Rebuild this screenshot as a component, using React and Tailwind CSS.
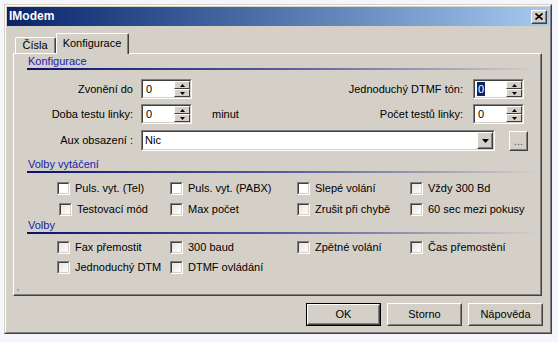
import React from "react";

function Sunken({ className, children }) {
  return (
    <div className={"border border-t-[#808080] border-l-[#808080] border-r-white border-b-white " + className}>
      <div className="flex h-full w-full border border-t-[#404040] border-l-[#404040] border-r-[#d4d0c8] border-b-[#d4d0c8] bg-white">
        {children}
      </div>
    </div>
  );
}

function Raised({ className, children }) {
  return (
    <div className={"border border-t-white border-l-white border-r-[#404040] border-b-[#404040] bg-[#d4d0c8] " + className}>
      <div className="flex h-full w-full items-center justify-center border border-t-[#d4d0c8] border-l-[#d4d0c8] border-r-[#808080] border-b-[#808080]">
        {children}
      </div>
    </div>
  );
}

function Spin({ value, selected }) {
  return (
    <Sunken className="h-[20px] w-[51px]">
      <div className="flex flex-1 items-center pl-[2px]">
        {selected ? (
          <span className="bg-[#0a246a] px-px leading-[14px] text-white">{value}</span>
        ) : (
          <span className="pl-px">{value}</span>
        )}
      </div>
      <div className="flex w-[16px] flex-col">
        <div className="flex h-[8px] items-center justify-center border border-t-white border-l-white border-r-[#404040] border-b-[#404040] bg-[#d4d0c8]">
          <svg width="5" height="3" viewBox="0 0 5 3">
            <path d="M2.5 0L5 3H0z" fill="black" />
          </svg>
        </div>
        <div className="flex h-[8px] items-center justify-center border border-t-white border-l-white border-r-[#404040] border-b-[#404040] bg-[#d4d0c8]">
          <svg width="5" height="3" viewBox="0 0 5 3">
            <path d="M0 0H5L2.5 3z" fill="black" />
          </svg>
        </div>
      </div>
    </Sunken>
  );
}

function Box({ shade }) {
  return (
    <div className="h-[13px] w-[13px] shrink-0 border border-t-[#808080] border-l-[#808080] border-r-white border-b-white">
      <div
        className={
          shade
            ? "h-full w-full border border-t-[#404040] border-l-[#404040] border-r-[#d4d0c8] border-b-[#d4d0c8] bg-linear-to-br from-[#e6e4de] to-white"
            : "h-full w-full border border-t-[#404040] border-l-[#404040] border-r-[#d4d0c8] border-b-[#d4d0c8] bg-white"
        }
      />
    </div>
  );
}

function Check({ label, shade, className }) {
  return (
    <div className={"flex h-[15px] items-center " + (className || "")}>
      <Box shade={shade} />
      <span className="ml-[5px] whitespace-nowrap">{label}</span>
    </div>
  );
}

function Header({ title, className }) {
  return (
    <div className={"ml-[13px] mr-[2px] " + className}>
      <div className="h-[13px] pl-px leading-[13px] text-[#1a1aa6]">{title}</div>
      <div className="h-[2px] bg-linear-to-r from-[#0c0c70] via-[#5a5a9a] to-[#d4d0c8]" />
    </div>
  );
}

export default function App() {
  return (
    <div className="h-[342px] w-[558px] overflow-hidden bg-[#f4f6fb] pl-[4px] pt-[4px] font-['Liberation_Sans',Arial,sans-serif] text-[11px] leading-[13px] text-black">
      <div className="h-[330px] w-[548px] border border-t-[#d4d0c8] border-l-[#d4d0c8] border-r-[#404040] border-b-[#404040] bg-[#d4d0c8]">
        <div className="flex h-full flex-col border border-t-white border-l-white border-r-[#808080] border-b-[#808080] p-px">
          {/* Title bar */}
          <div className="flex h-[19px] items-center justify-between bg-linear-to-r from-[#0a246a] to-[#a6caf0] pl-[2px] pr-[2px]">
            <span className="text-[12px] font-bold text-white">IModem</span>
            <Raised className="h-[14px] w-[16px]">
              <svg width="8" height="7" viewBox="0 0 8 7">
                <path d="M0.5 0.5L7.5 6.5M7.5 0.5L0.5 6.5" stroke="black" strokeWidth="1.7" />
              </svg>
            </Raised>
          </div>

          {/* Body */}
          <div className="flex flex-col px-[6px] pt-[7px]">
            {/* Tabs */}
            <div className="flex h-[20px] items-end">
              <div className="ml-[2px] h-[16px] w-[41px] rounded-t-[2px] border-t border-l border-r border-t-white border-l-white border-r-[#404040]">
                <div className="flex h-full items-center justify-center border-r border-r-[#808080]">Čísla</div>
              </div>
              <div className="relative z-10 -mb-px h-[21px] w-[73px] rounded-t-[2px] border-t border-l border-r border-t-white border-l-white border-r-[#404040] bg-[#d4d0c8]">
                <div className="flex h-full items-center justify-center border-r border-r-[#808080] pb-[2px]">Konfigurace</div>
              </div>
            </div>

            {/* Panel */}
            <div className="h-[243px] w-[529px] border border-t-white border-l-white border-r-[#404040] border-b-[#404040]">
              <div className="flex h-full flex-col border-r border-b border-r-[#808080] border-b-[#808080]">
                <Header title="Konfigurace" className="mt-[1px]" />

                {/* Row 1 */}
                <div className="mt-[9px] flex h-[20px] items-center">
                  <div className="w-[119px] text-right">Zvonění do</div>
                  <div className="ml-[8px]">
                    <Spin value="0" />
                  </div>
                  <div className="flex-1 text-right">Jednoduchý DTMF tón:</div>
                  <div className="ml-[10px] mr-[16px]">
                    <Spin value="0" selected />
                  </div>
                </div>

                {/* Row 2 */}
                <div className="mt-[5px] flex h-[20px] items-center">
                  <div className="w-[119px] text-right">Doba testu linky:</div>
                  <div className="ml-[8px]">
                    <Spin value="0" />
                  </div>
                  <div className="ml-[20px]">minut</div>
                  <div className="flex-1 text-right">Počet testů linky:</div>
                  <div className="ml-[10px] mr-[16px]">
                    <Spin value="0" />
                  </div>
                </div>

                {/* Row 3 */}
                <div className="mt-[6px] flex h-[21px] items-center">
                  <div className="w-[119px] text-right">Aux obsazení :</div>
                  <Sunken className="ml-[8px] h-[21px] w-[354px]">
                    <div className="flex flex-1 items-center pl-[2px]">Nic</div>
                    <Raised className="h-full w-[16px]">
                      <svg width="7" height="4" viewBox="0 0 7 4">
                        <path d="M0 0H7L3.5 4z" fill="black" />
                      </svg>
                    </Raised>
                  </Sunken>
                  <Raised className="ml-[14px] h-[20px] w-[19px]">
                    <span className="pt-[2px] text-[#505050]">...</span>
                  </Raised>
                </div>

                <Header title="Volby vytáčení" className="mt-[7px]" />

                <div className="mt-[8px] grid grid-cols-[113px_127px_113px_1fr] pl-[43px]">
                  <Check label="Puls. vyt. (Tel)" />
                  <Check label="Puls. vyt. (PABX)" />
                  <Check label="Slepé volání" />
                  <Check label="Vždy 300 Bd" shade />
                </div>
                <div className="mt-[6px] grid grid-cols-[113px_127px_113px_1fr] pl-[43px]">
                  <Check label="Testovací mód" shade className="ml-[2px]" />
                  <Check label="Max počet" shade />
                  <Check label="Zrušit při chybě" shade />
                  <Check label="60 sec mezi pokusy" shade />
                </div>

                <Header title="Volby" className="mt-[2px]" />

                <div className="mt-[6px] grid grid-cols-[113px_127px_113px_1fr] pl-[43px]">
                  <Check label="Fax přemostit" shade />
                  <Check label="300 baud" shade />
                  <Check label="Zpětné volání" shade />
                  <Check label="Čas přemostění" shade />
                </div>
                <div className="mt-[5px] grid grid-cols-[113px_127px_113px_1fr] pl-[43px]">
                  <Check label="Jednoduchý DTM" shade />
                  <Check label="DTMF ovládání" shade />
                </div>

                <div className="mt-auto mb-[3px] ml-[3px] h-[2px] w-[2px] bg-[#a0a0a0]" />
              </div>
            </div>

            {/* Buttons */}
            <div className="mt-[7px] flex w-[530px] justify-end gap-[6px]">
              <div className="h-[23px] w-[75px] border border-black">
                <Raised className="h-full w-full">OK</Raised>
              </div>
              <Raised className="h-[23px] w-[75px]">Storno</Raised>
              <Raised className="h-[23px] w-[75px]">Nápověda</Raised>
            </div>
          </div>
        </div>
      </div>
    </div>
  );
}
